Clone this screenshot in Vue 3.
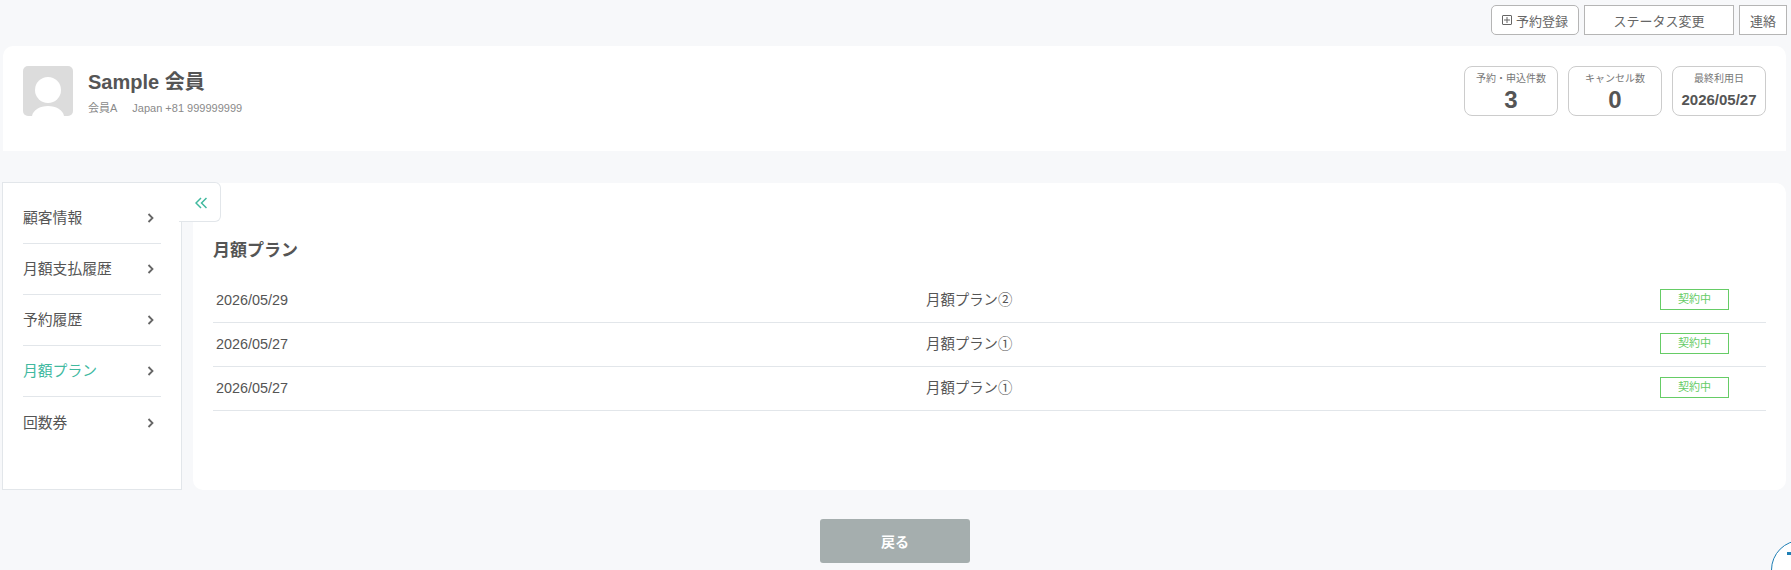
<template>
  <div class="page">
    <div class="top-actions">
      <button class="btn btn-round">
        <svg class="plus" width="10" height="10" viewBox="0 0 10 10">
          <rect x="0.5" y="0.5" width="9" height="9" rx="0.5" fill="none" stroke="currentColor" />
          <path d="M5 2v6M2 5h6" stroke="currentColor" fill="none" />
        </svg>
        予約登録
      </button>
      <button class="btn btn-status">ステータス変更</button>
      <button class="btn btn-contact">連絡</button>
    </div>

    <section class="member-card">
      <div class="avatar">
        <svg width="50" height="50" viewBox="0 0 50 50">
          <circle cx="25" cy="24" r="13" fill="#fff" />
          <path d="M9 50c1-6 8-10 16-10s15 4 16 10z" fill="#fff" />
        </svg>
      </div>
      <div class="member-info">
        <div class="member-name">Sample 会員</div>
        <div class="member-sub">
          <span>会員A</span>
          <span>Japan +81 999999999</span>
        </div>
      </div>
      <div class="stats">
        <div v-for="s in stats" :key="s.label" class="stat">
          <div class="stat-label">{{ s.label }}</div>
          <div class="stat-value" :class="{ small: s.small }">{{ s.value }}</div>
        </div>
      </div>
    </section>

    <div class="content">
      <aside class="sidebar">
        <div class="collapse-tab">
          <svg width="12" height="12" viewBox="0 0 12 12" fill="none" stroke="#41b99f" stroke-width="1.5">
            <path d="M6 1 1 6l5 5M11.500 1 6.500 6l5 5" />
          </svg>
        </div>
        <ul class="menu">
          <li v-for="m in menu" :key="m" class="menu-item" :class="{ active: m === '月額プラン' }">
            <span class="menu-label">{{ m }}</span>
            <svg width="7" height="10" viewBox="0 0 7 10" fill="none" stroke="#666" stroke-width="1.8">
              <path d="M1.500 1l4 4-4 4" />
            </svg>
          </li>
        </ul>
      </aside>

      <main class="panel">
        <h2 class="panel-title">月額プラン</h2>
        <div v-for="(r, i) in rows" :key="i" class="row">
          <span class="row-date">{{ r.date }}</span>
          <span class="row-name">{{ r.name }}</span>
          <span class="badge">契約中</span>
        </div>
      </main>
    </div>

    <div class="footer">
      <button class="back">戻る</button>
    </div>

    <div class="help-circle"><span class="help-bar"></span></div>
  </div>
</template>

<script setup>
const stats = [
  { label: '予約・申込件数', value: '3' },
  { label: 'キャンセル数', value: '0' },
  { label: '最終利用日', value: '2026/05/27', small: true }
]

const menu = ['顧客情報', '月額支払履歴', '予約履歴', '月額プラン', '回数券']

const rows = [
  { date: '2026/05/29', name: '月額プラン②' },
  { date: '2026/05/27', name: '月額プラン①' },
  { date: '2026/05/27', name: '月額プラン①' }
]
</script>

<style>
html,
body {
  margin: 0;
  background: #f7f8fa;
  overflow: hidden;
}
</style>

<style scoped>
.page {
  position: relative;
  width: 1791px;
  height: 570px;
  overflow: hidden;
  box-sizing: border-box;
  padding: 5px 5px 0 3px;
  background: #f7f8fa;
  color: #555;
  font-family: "Liberation Sans", "Noto Sans CJK JP", sans-serif;
}

.top-actions {
  display: flex;
  justify-content: flex-end;
  gap: 5px;
  margin-right: -1px;
  height: 30px;
}

.btn {
  box-sizing: border-box;
  height: 30px;
  padding: 0;
  border: 1px solid #b5b5b5;
  background: #fff;
  color: #666;
  font: inherit;
  font-size: 13px;
  display: flex;
  align-items: center;
  justify-content: center;
}

.btn-round {
  width: 88px;
  gap: 4px;
  border-radius: 5px;
}

.btn-status {
  width: 150px;
}

.btn-contact {
  width: 48px;
}

.member-card {
  display: flex;
  box-sizing: border-box;
  height: 105px;
  margin-top: 11px;
  padding: 20px;
  background: #fff;
  border-radius: 10px 10px 0 0;
}

.avatar {
  width: 50px;
  height: 50px;
  border-radius: 5px;
  background: #dcdcdc;
  overflow: hidden;
}

.avatar svg {
  display: block;
}

.member-info {
  margin-left: 15px;
  flex: 1;
}

.member-name {
  margin-top: 4px;
  font-size: 20px;
  line-height: 24px;
  font-weight: 700;
}

.member-sub {
  margin-top: 7px;
  display: flex;
  gap: 15px;
  font-size: 11px;
  line-height: 14px;
  color: #8a8a8a;
}

.stats {
  display: flex;
  gap: 10px;
}

.stat {
  box-sizing: border-box;
  width: 94px;
  height: 50px;
  border: 1px solid #ccc;
  border-radius: 8px;
  text-align: center;
}

.stat-label {
  margin-top: 5px;
  font-size: 10px;
  line-height: 14px;
  color: #777;
}

.stat-value {
  font-size: 24px;
  line-height: 28px;
  font-weight: 700;
}

.stat-value.small {
  font-size: 15px;
}

.content {
  display: flex;
  gap: 11px;
  margin-top: 31px;
  height: 308px;
}

.sidebar {
  position: relative;
  box-sizing: border-box;
  width: 180px;
  padding: 10px 20px 0;
  background: #fff;
  border: 1px solid #e2e6ea;
  margin-left: -1px;
}

.collapse-tab {
  position: absolute;
  left: 176px;
  top: -1px;
  width: 42px;
  height: 40px;
  box-sizing: border-box;
  padding: 14px 0 0 16px;
  background: #fff;
  border: 1px solid #e2e6ea;
  border-left: 0;
  border-radius: 0 6px 6px 0;
}

.collapse-tab svg {
  display: block;
}

.menu {
  list-style: none;
  margin: 0;
  padding: 0;
}

.menu-item {
  display: flex;
  justify-content: space-between;
  align-items: center;
  box-sizing: border-box;
  height: 51px;
  padding-right: 7px;
  font-size: 14.800px;
  border-bottom: 1px solid #e2e6ea;
}

.menu-item:last-child {
  border-bottom: 0;
}

.menu-label {
  margin-bottom: 3px;
}

.menu-item.active span {
  color: #41b99f;
}

.panel {
  flex: 1;
  box-sizing: border-box;
  margin-top: 1px;
  padding: 57px 20px 0;
  background: #fff;
  border-radius: 10px;
}

.panel-title {
  margin: 0 0 17px;
  font-size: 17px;
  line-height: 22px;
  font-weight: 700;
}

.row {
  display: flex;
  align-items: center;
  box-sizing: border-box;
  height: 44px;
  padding-left: 3px;
  font-size: 14.400px;
  border-bottom: 1px solid #e2e6ea;
}

.row-date {
  width: 710px;
  margin-bottom: 2px;
}

.row-name {
  flex: 1;
  margin-bottom: 5px;
}

.badge {
  box-sizing: border-box;
  width: 69px;
  height: 21px;
  margin-right: 37px;
  margin-bottom: 2px;
  border: 1px solid #66cc66;
  color: #66cc66;
  font-size: 11px;
  line-height: 19px;
  text-align: center;
}

.footer {
  display: flex;
  justify-content: center;
  margin-top: 29px;
}

.back {
  width: 150px;
  height: 44px;
  margin-left: 1px;
  border: 0;
  border-radius: 3px;
  background: #a5aeae;
  color: #fff;
  font: inherit;
  font-size: 14px;
  font-weight: 700;
}

.help-circle {
  position: absolute;
  left: 1771px;
  top: 540px;
  width: 60px;
  height: 60px;
  box-sizing: border-box;
  border: 1.5px solid #1f7fb5;
  border-radius: 50%;
  background: #fff;
}

.help-bar {
  position: absolute;
  left: 15px;
  top: 11px;
  width: 20px;
  height: 3px;
  background: #1f7fb5;
}

.plus {
  color: #666;
}
</style>
